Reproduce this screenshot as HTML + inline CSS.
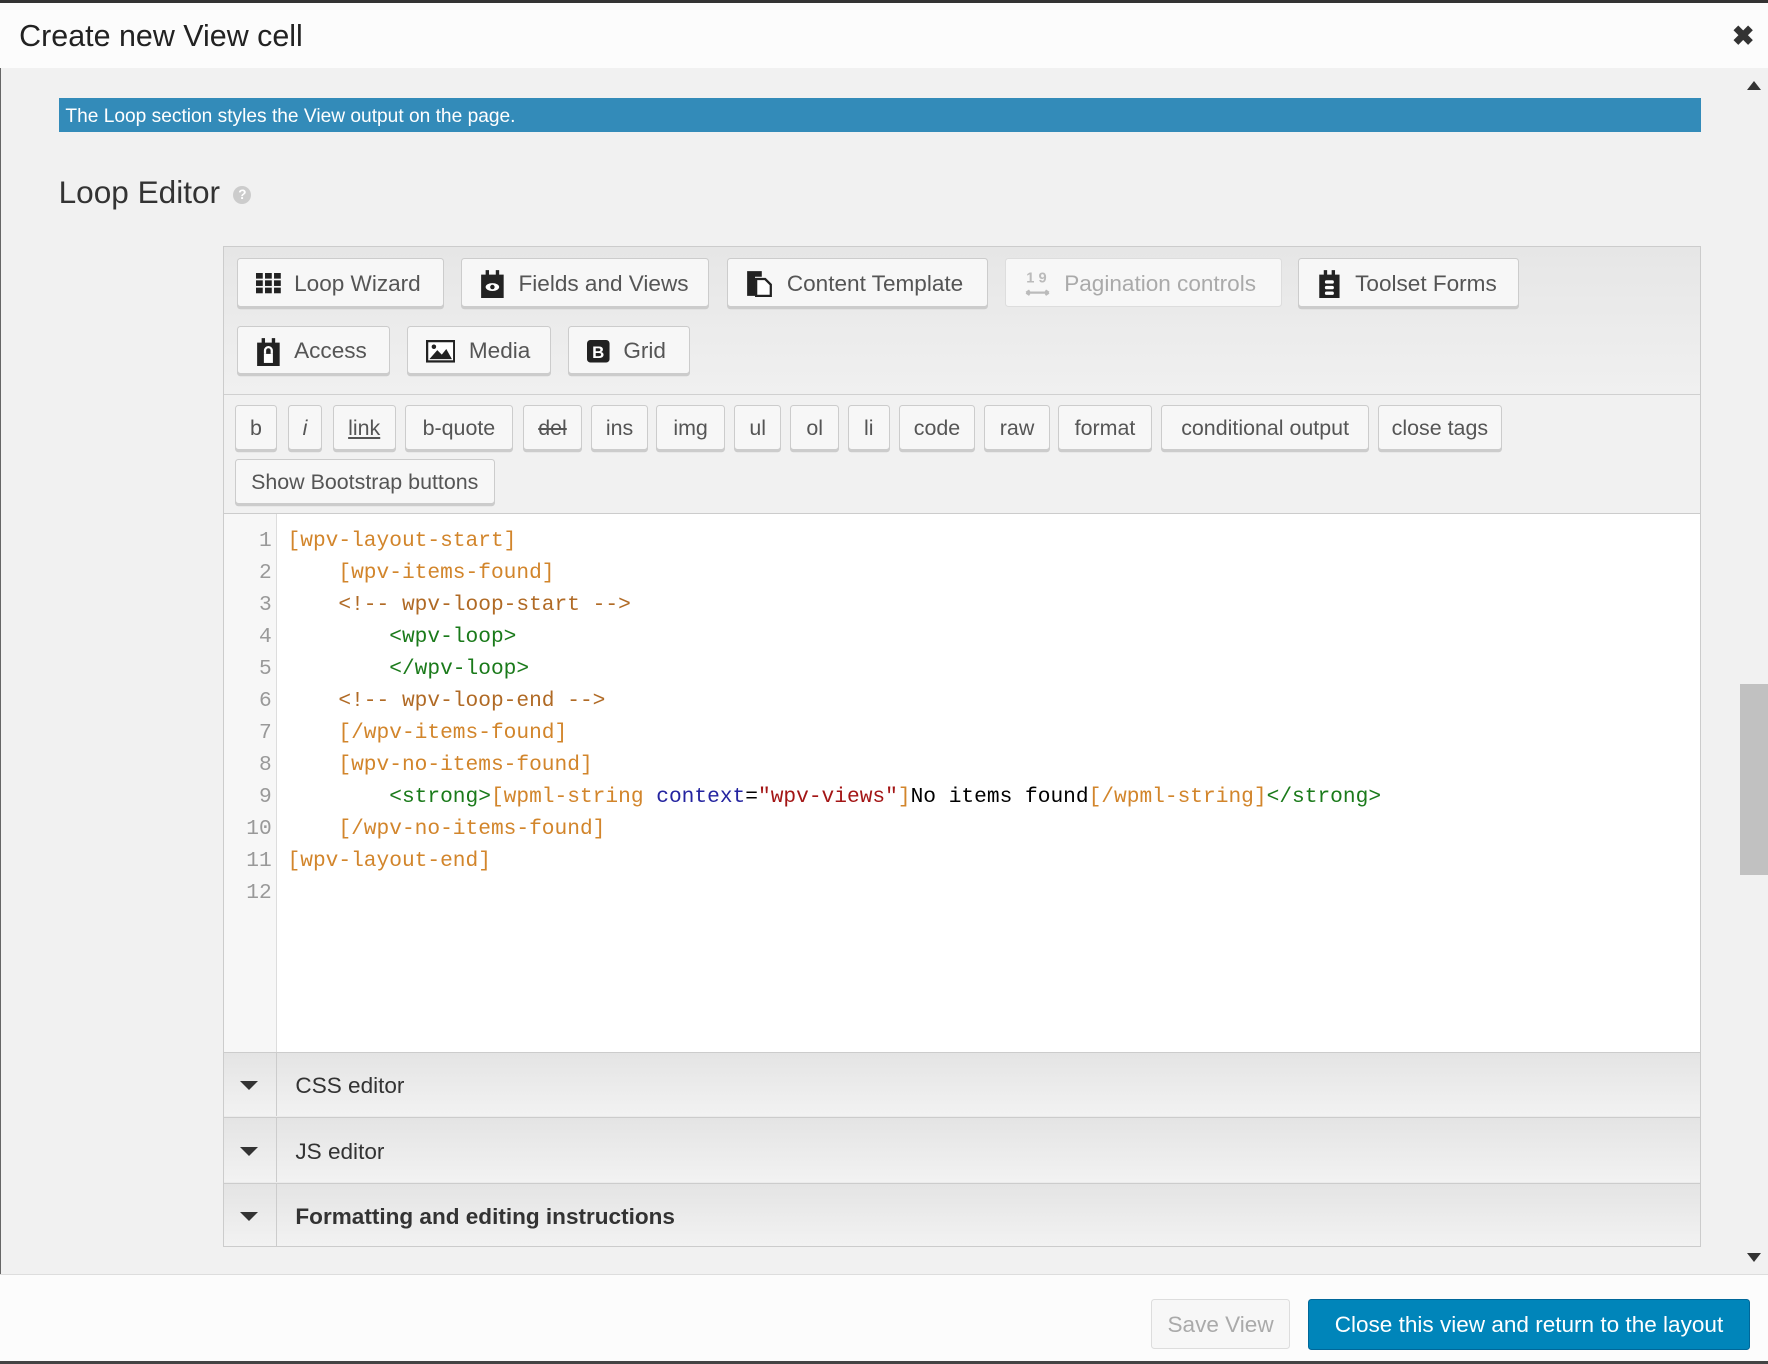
<!DOCTYPE html>
<html><head><meta charset="utf-8"><style>
html,body{margin:0;padding:0;width:1768px;height:1364px;overflow:hidden;background:#f1f1f1;font-family:"Liberation Sans",sans-serif;}
#w{zoom:1.12755;position:relative;width:1568px;height:1210px;background:#f1f1f1;}
.a{position:absolute;}
.hdr{left:0;top:0;width:1568px;height:60px;background:#fcfcfc;border-top:3px solid #333;box-sizing:border-box;}
.title{left:17px;top:17px;font-size:27px;color:#222;}
.x{left:1536px;top:19px;font-size:24px;color:#333;font-weight:bold;}
.leftline{left:0;top:60px;width:1px;height:1080px;background:#666;}
.blue{left:52px;top:87px;width:1457px;height:30px;background:#338bb9;color:#fff;font-size:17px;line-height:34px;padding-left:6px;box-sizing:border-box;}
.le{left:52px;top:154px;font-size:28px;color:#333;}
.q{left:207px;top:165px;width:16px;height:16px;border-radius:50%;background:#ccc;color:#fff;font-size:12px;text-align:center;line-height:16px;font-weight:bold;}
.box{left:198px;top:218px;width:1311px;height:888px;border:1px solid #ccc;box-sizing:border-box;background:#ebebeb;}
.tb1{left:199px;top:219px;width:1309px;height:130px;background:linear-gradient(#e6e6e6,#f0f0f0);border-bottom:1px solid #d0d0d0;}
.tb2{left:199px;top:350px;width:1309px;height:105px;background:#f1f1f1;border-bottom:1px solid #ccc;}
.btn{position:absolute;background:#f7f7f7;border:1px solid #ccc;border-radius:3px;box-shadow:0 2px 0 #ccc;box-sizing:border-box;color:#555;font-size:20px;display:flex;align-items:center;white-space:nowrap;padding-top:2px;}
.big{height:43px;}
.big svg{margin:0 12px 0 16px;flex:none;}
.sm{height:40px;justify-content:center;font-size:19px;color:#555;}
.code{left:199px;top:456px;width:1309px;height:477px;background:#fff;}
.gut{left:199px;top:456px;width:47px;height:477px;background:#f7f7f7;border-right:1px solid #ddd;box-sizing:border-box;}
.ln{position:absolute;left:199px;width:42px;text-align:right;font-family:"Liberation Mono",monospace;font-size:18.8px;color:#999;}
.cl{position:absolute;left:255px;font-family:"Liberation Mono",monospace;font-size:18.8px;white-space:pre;color:#000;}
.o{color:#d2852b}.c{color:#b06a25}.g{color:#1a7a1a}.b{color:#2424a0}.r{color:#a31515}
.acc{position:absolute;left:199px;width:1309px;height:57px;background:linear-gradient(#e4e4e4,#f2f2f2);border-top:1px solid #ccc;box-sizing:border-box;}
.acc .ic{position:absolute;left:0;top:0;width:46px;height:100%;border-right:1px solid #ccc;}
.acc .ic:after{content:"";position:absolute;left:14px;top:25px;border-left:8px solid transparent;border-right:8px solid transparent;border-top:8px solid #333;}
.acc span{position:absolute;left:63px;top:18px;font-size:20px;color:#333;}
.sb{left:1543px;top:607px;width:25px;height:169px;background:#c1c1c1;}
.foot{left:0;top:1130px;width:1568px;height:80px;background:#fcfcfc;border-top:1px solid #ddd;box-sizing:border-box;}
</style></head><body><div id="w">
<div class="a hdr"></div>
<div class="a title">Create new View cell</div>
<div class="a x">✖</div>
<div class="a leftline"></div>
<div class="a" style="left:1549px;top:72px;border-left:7px solid transparent;border-right:7px solid transparent;border-bottom:8px solid #333;"></div>
<div class="a" style="left:1549px;top:1111px;border-left:7px solid transparent;border-right:7px solid transparent;border-top:8px solid #333;"></div>
<div class="a sb"></div>
<div class="a blue">The Loop section styles the View output on the page.</div>
<div class="a le">Loop Editor</div>
<div class="a q">?</div>
<div class="a box"></div>
<div class="a tb1"></div>
<div class="a tb2"></div>

<div class="btn big" style="left:210px;top:229px;width:184px;"><svg width="22" height="18" viewBox="0 0 22 18"><g fill="#222"><rect x="0" y="0" width="6" height="5"/><rect x="8" y="0" width="6" height="5"/><rect x="16" y="0" width="6" height="5"/><rect x="0" y="6.5" width="6" height="5"/><rect x="8" y="6.5" width="6" height="5"/><rect x="16" y="6.5" width="6" height="5"/><rect x="0" y="13" width="6" height="5"/><rect x="8" y="13" width="6" height="5"/><rect x="16" y="13" width="6" height="5"/></g></svg>Loop Wizard</div>
<div class="btn big" style="left:409px;top:229px;width:220px;"><svg width="22" height="26" viewBox="0 0 22 26"><path d="M1 5h4V1h3v4h6V1h3v4h4v21H1z" fill="#222"/><ellipse cx="11" cy="16" rx="6" ry="3.5" fill="#fff"/><circle cx="11" cy="16" r="2" fill="#222"/></svg>Fields and Views</div>
<div class="btn big" style="left:645px;top:229px;width:231px;"><svg width="24" height="24" viewBox="0 0 24 24"><path d="M1 1h13v5H8v17H1z" fill="#222"/><path d="M9 8h8l5 5v10H9z" fill="#fff" stroke="#222" stroke-width="2"/></svg>Content Template</div>
<div class="btn big" style="left:891px;top:229px;width:246px;color:#aaa;box-shadow:none;border-color:#ddd;"><svg width="24" height="26" viewBox="0 0 24 26"><text x="2" y="12" font-size="13" font-weight="bold" fill="#bbb" font-family="Liberation Sans">1 9</text><path d="M2 21h20M2 21l3-2M2 21l3 2M22 21l-3-2M22 21l-3 2" stroke="#bbb" stroke-width="2"/></svg>Pagination controls</div>
<div class="btn big" style="left:1151px;top:229px;width:196px;"><svg width="22" height="26" viewBox="0 0 22 26"><path d="M2 5h4V1h3v4h4V1h3v4h4v21H2z" fill="#222"/><rect x="7" y="10" width="8" height="3" rx="1.5" fill="#fff"/><rect x="7" y="15" width="8" height="3" rx="1.5" fill="#fff"/><rect x="7" y="20" width="8" height="3" rx="1.5" fill="#fff"/></svg>Toolset Forms</div>

<div class="btn big" style="left:210px;top:289px;width:136px;"><svg width="22" height="26" viewBox="0 0 22 26"><path d="M1 5h4V1h3v4h6V1h3v4h4v21H1z" fill="#222"/><rect x="7" y="15" width="8" height="8" fill="#fff"/><path d="M8 15v-3a3 3 0 0 1 6 0v3" stroke="#fff" stroke-width="2" fill="none"/></svg>Access</div>
<div class="btn big" style="left:361px;top:289px;width:128px;"><svg width="26" height="20" viewBox="0 0 26 20"><rect x="1" y="1" width="24" height="18" fill="#fff" stroke="#222" stroke-width="2"/><path d="M3 17l7-8 4 4 4-5 5 9z" fill="#222"/><circle cx="7" cy="6" r="2" fill="#222"/></svg>Media</div>
<div class="btn big" style="left:504px;top:289px;width:108px;"><svg width="20" height="20" viewBox="0 0 20 20"><rect width="20" height="20" rx="3" fill="#222"/><text x="4.5" y="16" font-size="15" font-weight="bold" fill="#fff" font-family="Liberation Sans">B</text></svg>Grid</div>

<div class="btn sm" style="left:208px;top:359px;width:38px;">b</div>
<div class="btn sm" style="left:255px;top:359px;width:31px;font-style:italic;">i</div>
<div class="btn sm" style="left:295px;top:359px;width:56px;text-decoration:underline;">link</div>
<div class="btn sm" style="left:359px;top:359px;width:96px;">b-quote</div>
<div class="btn sm" style="left:464px;top:359px;width:52px;text-decoration:line-through;">del</div>
<div class="btn sm" style="left:524px;top:359px;width:51px;">ins</div>
<div class="btn sm" style="left:582px;top:359px;width:61px;">img</div>
<div class="btn sm" style="left:651px;top:359px;width:42px;">ul</div>
<div class="btn sm" style="left:701px;top:359px;width:43px;">ol</div>
<div class="btn sm" style="left:752px;top:359px;width:37px;">li</div>
<div class="btn sm" style="left:797px;top:359px;width:68px;">code</div>
<div class="btn sm" style="left:873px;top:359px;width:58px;">raw</div>
<div class="btn sm" style="left:938px;top:359px;width:84px;">format</div>
<div class="btn sm" style="left:1030px;top:359px;width:184px;">conditional output</div>
<div class="btn sm" style="left:1222px;top:359px;width:110px;">close tags</div>
<div class="btn sm" style="left:208px;top:407px;width:231px;">Show Bootstrap buttons</div>

<div class="a code"></div>
<div class="a gut"></div>
<div class="ln" style="top:469px">1</div><div class="ln" style="top:497.4px">2</div><div class="ln" style="top:525.8px">3</div><div class="ln" style="top:554.2px">4</div><div class="ln" style="top:582.6px">5</div><div class="ln" style="top:611px">6</div><div class="ln" style="top:639.4px">7</div><div class="ln" style="top:667.8px">8</div><div class="ln" style="top:696.2px">9</div><div class="ln" style="top:724.6px">10</div><div class="ln" style="top:753px">11</div><div class="ln" style="top:781.4px">12</div>
<div class="cl o" style="top:469px">[wpv-layout-start]</div>
<div class="cl o" style="top:497.4px">    [wpv-items-found]</div>
<div class="cl c" style="top:525.8px">    &lt;!-- wpv-loop-start --&gt;</div>
<div class="cl g" style="top:554.2px">        &lt;wpv-loop&gt;</div>
<div class="cl g" style="top:582.6px">        &lt;/wpv-loop&gt;</div>
<div class="cl c" style="top:611px">    &lt;!-- wpv-loop-end --&gt;</div>
<div class="cl o" style="top:639.4px">    [/wpv-items-found]</div>
<div class="cl o" style="top:667.8px">    [wpv-no-items-found]</div>
<div class="cl" style="top:696.2px">        <span class="g">&lt;strong&gt;</span><span class="o">[wpml-string </span><span class="b">context</span>=<span class="r">"wpv-views"</span><span class="o">]</span>No items found<span class="o">[/wpml-string]</span><span class="g">&lt;/strong&gt;</span></div>
<div class="cl o" style="top:724.6px">    [/wpv-no-items-found]</div>
<div class="cl o" style="top:753px">[wpv-layout-end]</div>

<div class="acc" style="top:933px"><div class="ic"></div><span>CSS editor</span></div>
<div class="acc" style="top:991px"><div class="ic"></div><span>JS editor</span></div>
<div class="acc" style="top:1049px;border-bottom:1px solid #ccc;"><div class="ic"></div><span style="font-weight:bold">Formatting and editing instructions</span></div>

<div class="a foot"></div>
<div class="a" style="left:1021px;top:1152px;width:123px;height:44px;border:1px solid #ddd;border-radius:3px;box-sizing:border-box;color:#aaa;font-size:20px;text-align:center;line-height:44px;background:#f7f7f7;">Save View</div>
<div class="a" style="left:1160px;top:1152px;width:392px;height:45px;border-radius:3px;background:#0085ba;border:1px solid #006799;box-sizing:border-box;color:#fff;font-size:20px;text-align:center;line-height:45px;">Close this view and return to the layout</div>
<div class="a" style="left:0;top:1207px;width:1568px;height:3px;background:#444;"></div>
</div></body></html>
